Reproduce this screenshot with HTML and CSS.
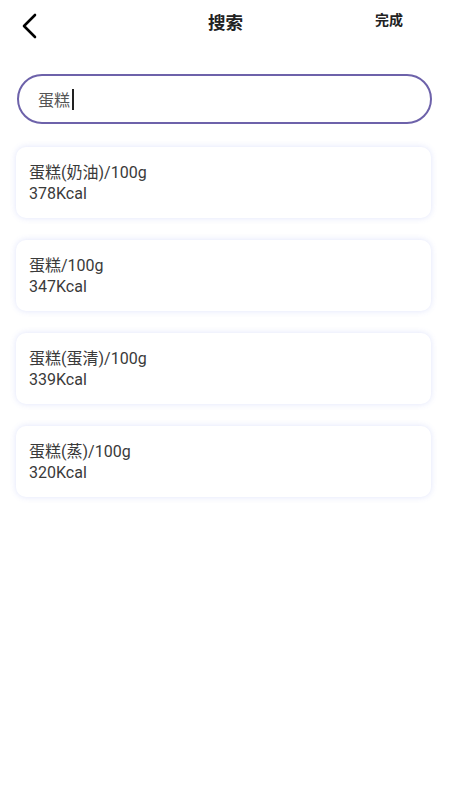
FILE: index.html
```html
<!DOCTYPE html>
<html lang="zh">
<head>
    <meta charset="UTF-8">
    <meta name="viewport" content="width=device-width, initial-scale=1.0">
    <title>搜索</title>
    <link rel="stylesheet" href="styles.css">
</head>
<body>
    <header class="top-bar">
        <a href="#" class="back">
            <svg width="18" height="26" viewBox="0 0 18 26">
                <path d="M15 2 L4 13 L15 24" fill="none" stroke="#000" stroke-width="2.6" stroke-linecap="round" stroke-linejoin="round"/>
            </svg>
        </a>
        <h1 class="title">搜索</h1>
        <a href="#" class="done">完成</a>
    </header>

    <div class="search-box">
        <span class="query">蛋糕</span><span class="caret"></span>
    </div>

    <div class="result-list">
        <div class="result">
            <div>蛋糕(奶油)/100g</div>
            <div>378Kcal</div>
        </div>
        <div class="result">
            <div>蛋糕/100g</div>
            <div>347Kcal</div>
        </div>
        <div class="result">
            <div>蛋糕(蛋清)/100g</div>
            <div>339Kcal</div>
        </div>
        <div class="result">
            <div>蛋糕(蒸)/100g</div>
            <div>320Kcal</div>
        </div>
    </div>
</body>
</html>
```

FILE: styles.css
```css
body {
    margin: 0;
    padding: 0 0 40px;
    min-height: 760px;
    background: #fff;
    font-family: Roboto, "Noto Sans CJK SC", sans-serif;
    color: #3a3a3a;
}
.top-bar {
    display: flex;
    align-items: flex-start;
    justify-content: space-between;
    height: 46px;
    padding: 0 47px 0 20px;
}
.back {
    display: block;
    padding-top: 13px;
}
.back svg {
    display: block;
}
.title {
    margin: 0;
    padding-top: 11px;
    padding-left: 38px;
    font-size: 17.5px;
    line-height: 24px;
    font-weight: bold;
    color: #222;
}
.done {
    padding-top: 10px;
    font-size: 14px;
    line-height: 20px;
    font-weight: bold;
    color: #222;
    text-decoration: none;
}
.search-box {
    display: flex;
    align-items: center;
    box-sizing: border-box;
    height: 50px;
    margin: 28px 18px 0 17px;
    padding: 0 19px;
    border: 2px solid #6d62aa;
    border-radius: 25px;
    font-size: 16px;
    color: #555;
}
.caret {
    display: inline-block;
    width: 1.5px;
    height: 21px;
    margin-left: 2px;
    background: #222;
}
.result-list {
    display: flex;
    flex-direction: column;
    gap: 22px;
    margin: 23px 19px 0 16px;
}
.result {
    height: 71px;
    box-sizing: border-box;
    padding: 15px 13px 14px;
    border-radius: 10px;
    background: #fff;
    box-shadow: 0 0 6px rgba(95, 115, 230, 0.2);
    font-size: 16px;
    line-height: 21px;
}
```
